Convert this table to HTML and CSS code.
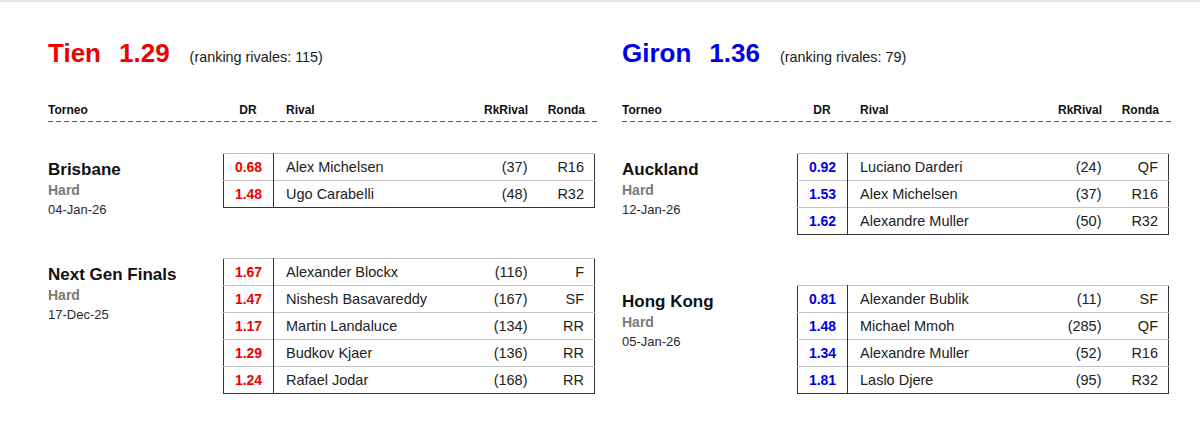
FILE: index.html
```html
<!DOCTYPE html>
<html lang="es">
<head>
<meta charset="utf-8">
<title>Tien vs Giron</title>
<link rel="stylesheet" href="styles.css">
</head>
<body>
<main class="page">
  <section class="player red">
    <h1 class="title"><span class="name">Tien</span><span class="score">1.29</span><span class="rank">(ranking rivales: 115)</span></h1>
    <div class="head">
      <span class="h-torneo">Torneo</span><span class="h-dr">DR</span><span class="h-rival">Rival</span><span class="h-rk">RkRival</span><span class="h-ronda">Ronda</span>
    </div>
    <div class="blocks">
      <div class="block">
        <div class="info"><div class="tname">Brisbane</div><div class="surface">Hard</div><div class="date">04-Jan-26</div></div>
        <table class="matches">
          <colgroup><col class="c-dr"><col><col class="c-rk"><col class="c-ronda"></colgroup>
          <tr><td class="dr">0.68</td><td class="rival">Alex Michelsen</td><td class="rk">(37)</td><td class="ronda">R16</td></tr>
          <tr><td class="dr">1.48</td><td class="rival">Ugo Carabelli</td><td class="rk">(48)</td><td class="ronda">R32</td></tr>
        </table>
      </div>
      <div class="block">
        <div class="info"><div class="tname">Next Gen Finals</div><div class="surface">Hard</div><div class="date">17-Dec-25</div></div>
        <table class="matches">
          <colgroup><col class="c-dr"><col><col class="c-rk"><col class="c-ronda"></colgroup>
          <tr><td class="dr">1.67</td><td class="rival">Alexander Blockx</td><td class="rk">(116)</td><td class="ronda">F</td></tr>
          <tr><td class="dr">1.47</td><td class="rival">Nishesh Basavareddy</td><td class="rk">(167)</td><td class="ronda">SF</td></tr>
          <tr><td class="dr">1.17</td><td class="rival">Martin Landaluce</td><td class="rk">(134)</td><td class="ronda">RR</td></tr>
          <tr><td class="dr">1.29</td><td class="rival">Budkov Kjaer</td><td class="rk">(136)</td><td class="ronda">RR</td></tr>
          <tr><td class="dr">1.24</td><td class="rival">Rafael Jodar</td><td class="rk">(168)</td><td class="ronda">RR</td></tr>
        </table>
      </div>
    </div>
  </section>

  <section class="player blue">
    <h1 class="title"><span class="name">Giron</span><span class="score">1.36</span><span class="rank">(ranking rivales: 79)</span></h1>
    <div class="head">
      <span class="h-torneo">Torneo</span><span class="h-dr">DR</span><span class="h-rival">Rival</span><span class="h-rk">RkRival</span><span class="h-ronda">Ronda</span>
    </div>
    <div class="blocks">
      <div class="block">
        <div class="info"><div class="tname">Auckland</div><div class="surface">Hard</div><div class="date">12-Jan-26</div></div>
        <table class="matches">
          <colgroup><col class="c-dr"><col><col class="c-rk"><col class="c-ronda"></colgroup>
          <tr><td class="dr">0.92</td><td class="rival">Luciano Darderi</td><td class="rk">(24)</td><td class="ronda">QF</td></tr>
          <tr><td class="dr">1.53</td><td class="rival">Alex Michelsen</td><td class="rk">(37)</td><td class="ronda">R16</td></tr>
          <tr><td class="dr">1.62</td><td class="rival">Alexandre Muller</td><td class="rk">(50)</td><td class="ronda">R32</td></tr>
        </table>
      </div>
      <div class="block">
        <div class="info"><div class="tname">Hong Kong</div><div class="surface">Hard</div><div class="date">05-Jan-26</div></div>
        <table class="matches">
          <colgroup><col class="c-dr"><col><col class="c-rk"><col class="c-ronda"></colgroup>
          <tr><td class="dr">0.81</td><td class="rival">Alexander Bublik</td><td class="rk">(11)</td><td class="ronda">SF</td></tr>
          <tr><td class="dr">1.48</td><td class="rival">Michael Mmoh</td><td class="rk">(285)</td><td class="ronda">QF</td></tr>
          <tr><td class="dr">1.34</td><td class="rival">Alexandre Muller</td><td class="rk">(52)</td><td class="ronda">R16</td></tr>
          <tr><td class="dr">1.81</td><td class="rival">Laslo Djere</td><td class="rk">(95)</td><td class="ronda">R32</td></tr>
        </table>
      </div>
    </div>
  </section>
</main>
</body>
</html>
```

FILE: styles.css
```css
html, body {
  margin: 0;
  padding: 0;
  background: #fff;
}

body {
  font-family: "Liberation Sans", Arial, sans-serif;
  color: #1a1a1a;
  border-top: 2px solid #e6e6e6;
  height: 420px;
  overflow: hidden;
}

.page {
  display: flex;
  gap: 25px;
  padding: 36px 0 0 48px;
}

.player {
  width: 549px;
}

.red { --accent: #f00000; }
.blue { --accent: #0000e8; }

.title {
  margin: 0;
  display: flex;
  align-items: baseline;
  font-size: 26px;
  line-height: 30px;
  font-weight: bold;
  color: var(--accent);
}

.title .score {
  margin-left: 18px;
}

.title .rank {
  margin-left: 20px;
  font-size: 14.4px;
  font-weight: normal;
  color: #1a1a1a;
}

.head {
  margin-top: 31px;
  display: grid;
  grid-template-columns: 175px 50px 1fr 80px 69px;
  font-size: 12px;
  line-height: 14px;
  font-weight: bold;
  color: #111;
  background-image: repeating-linear-gradient(to right, #555 0 5px, transparent 5px 8px);
  background-size: 100% 1px;
  background-repeat: no-repeat;
  background-position: left bottom;
  padding-bottom: 5px;
}

.h-dr { text-align: center; }
.h-rival { padding-left: 13px; }
.h-rk { text-align: right; }
.h-ronda { text-align: right; padding-right: 12px; }

.blocks {
  margin-top: 31px;
  display: flex;
  flex-direction: column;
  gap: 50px;
}

.block {
  display: grid;
  grid-template-columns: 175px 372px;
  align-items: start;
}

.info {
  padding-top: 7px;
  margin-bottom: -30px;
}

.tname {
  font-size: 17px;
  line-height: 20px;
  font-weight: bold;
  color: #111;
}

.surface {
  font-size: 14px;
  line-height: 20px;
  font-weight: bold;
  color: #7a7a7a;
}

.date {
  font-size: 13px;
  line-height: 20px;
  color: #2a2a2a;
}

.matches {
  width: 372px;
  table-layout: fixed;
  border-collapse: collapse;
  border: 1px solid #333;
  font-size: 14.5px;
  color: #222;
}

.c-dr { width: 50px; }
.c-rk { width: 80px; }
.c-ronda { width: 67px; }

.matches td {
  height: 26px;
  padding: 0;
  border-top: 1px solid #c4c4c4;
  white-space: nowrap;
}

.matches td.dr {
  text-align: center;
  font-weight: bold;
  font-size: 14px;
  color: var(--accent);
  border-right: 1px solid #333;
}

.matches td.rival { padding-left: 12px; }
.matches td.rk { text-align: right; }
.matches td.ronda { text-align: right; padding-right: 10px; }
```
